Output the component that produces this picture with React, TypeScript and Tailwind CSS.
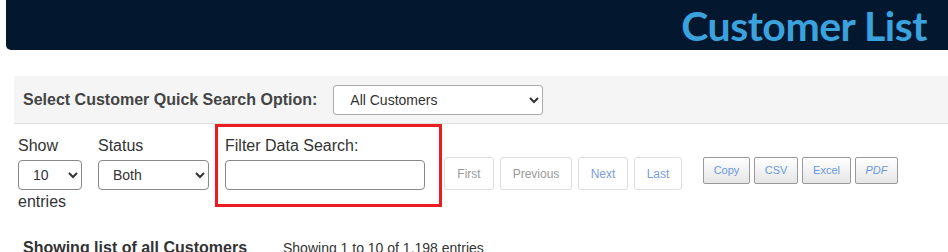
import React from 'react';

const arial = { fontFamily: '"Liberation Sans", Arial, sans-serif' };

function PageBtn({ label, dim, w }: { label: string; dim?: boolean; w: string }) {
    return (
        <button className={`h-[33px] rounded-[3px] border border-[#dddddd] bg-white text-[12px] ${w} ${dim ? 'text-[#999999]' : 'text-[#7a9de0]'}`}>
            {label}
        </button>
    );
}

function ExportBtn({ label, italic }: { label: string; italic?: boolean }) {
    return (
        <button className={`h-[27px] rounded-[2px] border border-[#999999] bg-gradient-to-b from-white to-[#e6e6e6] text-[11px] text-[#6a98de] ${italic ? 'italic' : ''}`}>
            {label}
        </button>
    );
}

export default function App() {
    return (
        <div className="h-[252px] w-[948px] overflow-hidden bg-white" style={arial}>
            {/* header bar */}
            <div className="ml-[6px] flex h-[50px] items-center justify-end rounded-bl-[5px] bg-[#03172f] pr-[21px]">
                <h1 className="text-[41px] font-bold leading-none tracking-[-0.5px] text-[#3aa2dd]"
                    style={{ fontFamily: 'Lato, sans-serif' }}>Customer List</h1>
            </div>

            {/* quick search panel */}
            <div className="ml-[14px] mt-[26px] flex h-[48px] items-center gap-[16px] border-b border-[#dddddd] bg-[#f5f5f5] pl-[9px]">
                <span className="text-[16px] font-bold text-[#444444]">Select Customer Quick Search Option:</span>
                <select className="h-[30px] w-[210px] rounded-[3px] border border-[#aaaaaa] bg-white pl-[12px] text-[14px] text-[#333333]">
                    <option>All Customers</option>
                </select>
            </div>

            {/* filter row */}
            <div className="mt-[12px] flex items-start pl-[18px]">
                <div className="flex flex-col text-[16px] text-[#333333]">
                    <span className="leading-[20px]">Show</span>
                    <select className="mt-[4px] h-[30px] w-[64px] rounded-[4px] border border-[#888888] bg-white pl-[10px] text-[14px]">
                        <option>10</option>
                    </select>
                    <span className="mt-[2px] leading-[20px]">entries</span>
                </div>
                <div className="ml-[16px] flex flex-col text-[16px] text-[#333333]">
                    <span className="leading-[20px]">Status</span>
                    <select className="mt-[4px] h-[30px] w-[111px] rounded-[4px] border border-[#888888] bg-white pl-[10px] text-[14px]">
                        <option>Both</option>
                    </select>
                </div>
                <div className="-mt-[12px] ml-[6px] flex h-[83px] w-[227px] flex-col border-[3px] border-[#ec1c24] pl-[7px] pt-[9px] text-[16px] text-[#333333]">
                    <span className="leading-[20px]">Filter Data Search:</span>
                    <input className="mt-[4px] h-[30px] w-[200px] rounded-[4px] border border-[#888888] bg-white" />
                </div>
                <div className="ml-[2px] mt-[21px] flex gap-[6px]">
                    <PageBtn label="First" w="w-[50px]" dim />
                    <PageBtn label="Previous" w="w-[72px]" dim />
                    <PageBtn label="Next" w="w-[50px]" />
                    <PageBtn label="Last" w="w-[48px]" />
                </div>
                <div className="ml-[21px] mt-[21px] grid grid-cols-[47px_44px_49px_43px] gap-[4px]">
                    <ExportBtn label="Copy" />
                    <ExportBtn label="CSV" />
                    <ExportBtn label="Excel" />
                    <ExportBtn label="PDF" italic />
                </div>
            </div>

            {/* summary line */}
            <div className="mt-[24px] flex items-baseline pl-[23px] text-[#333333]">
                <span className="w-[260px] text-[16px] font-bold">Showing list of all Customers</span>
                <span className="text-[14px]">Showing 1 to 10 of 1,198 entries</span>
            </div>
        </div>
    );
}
